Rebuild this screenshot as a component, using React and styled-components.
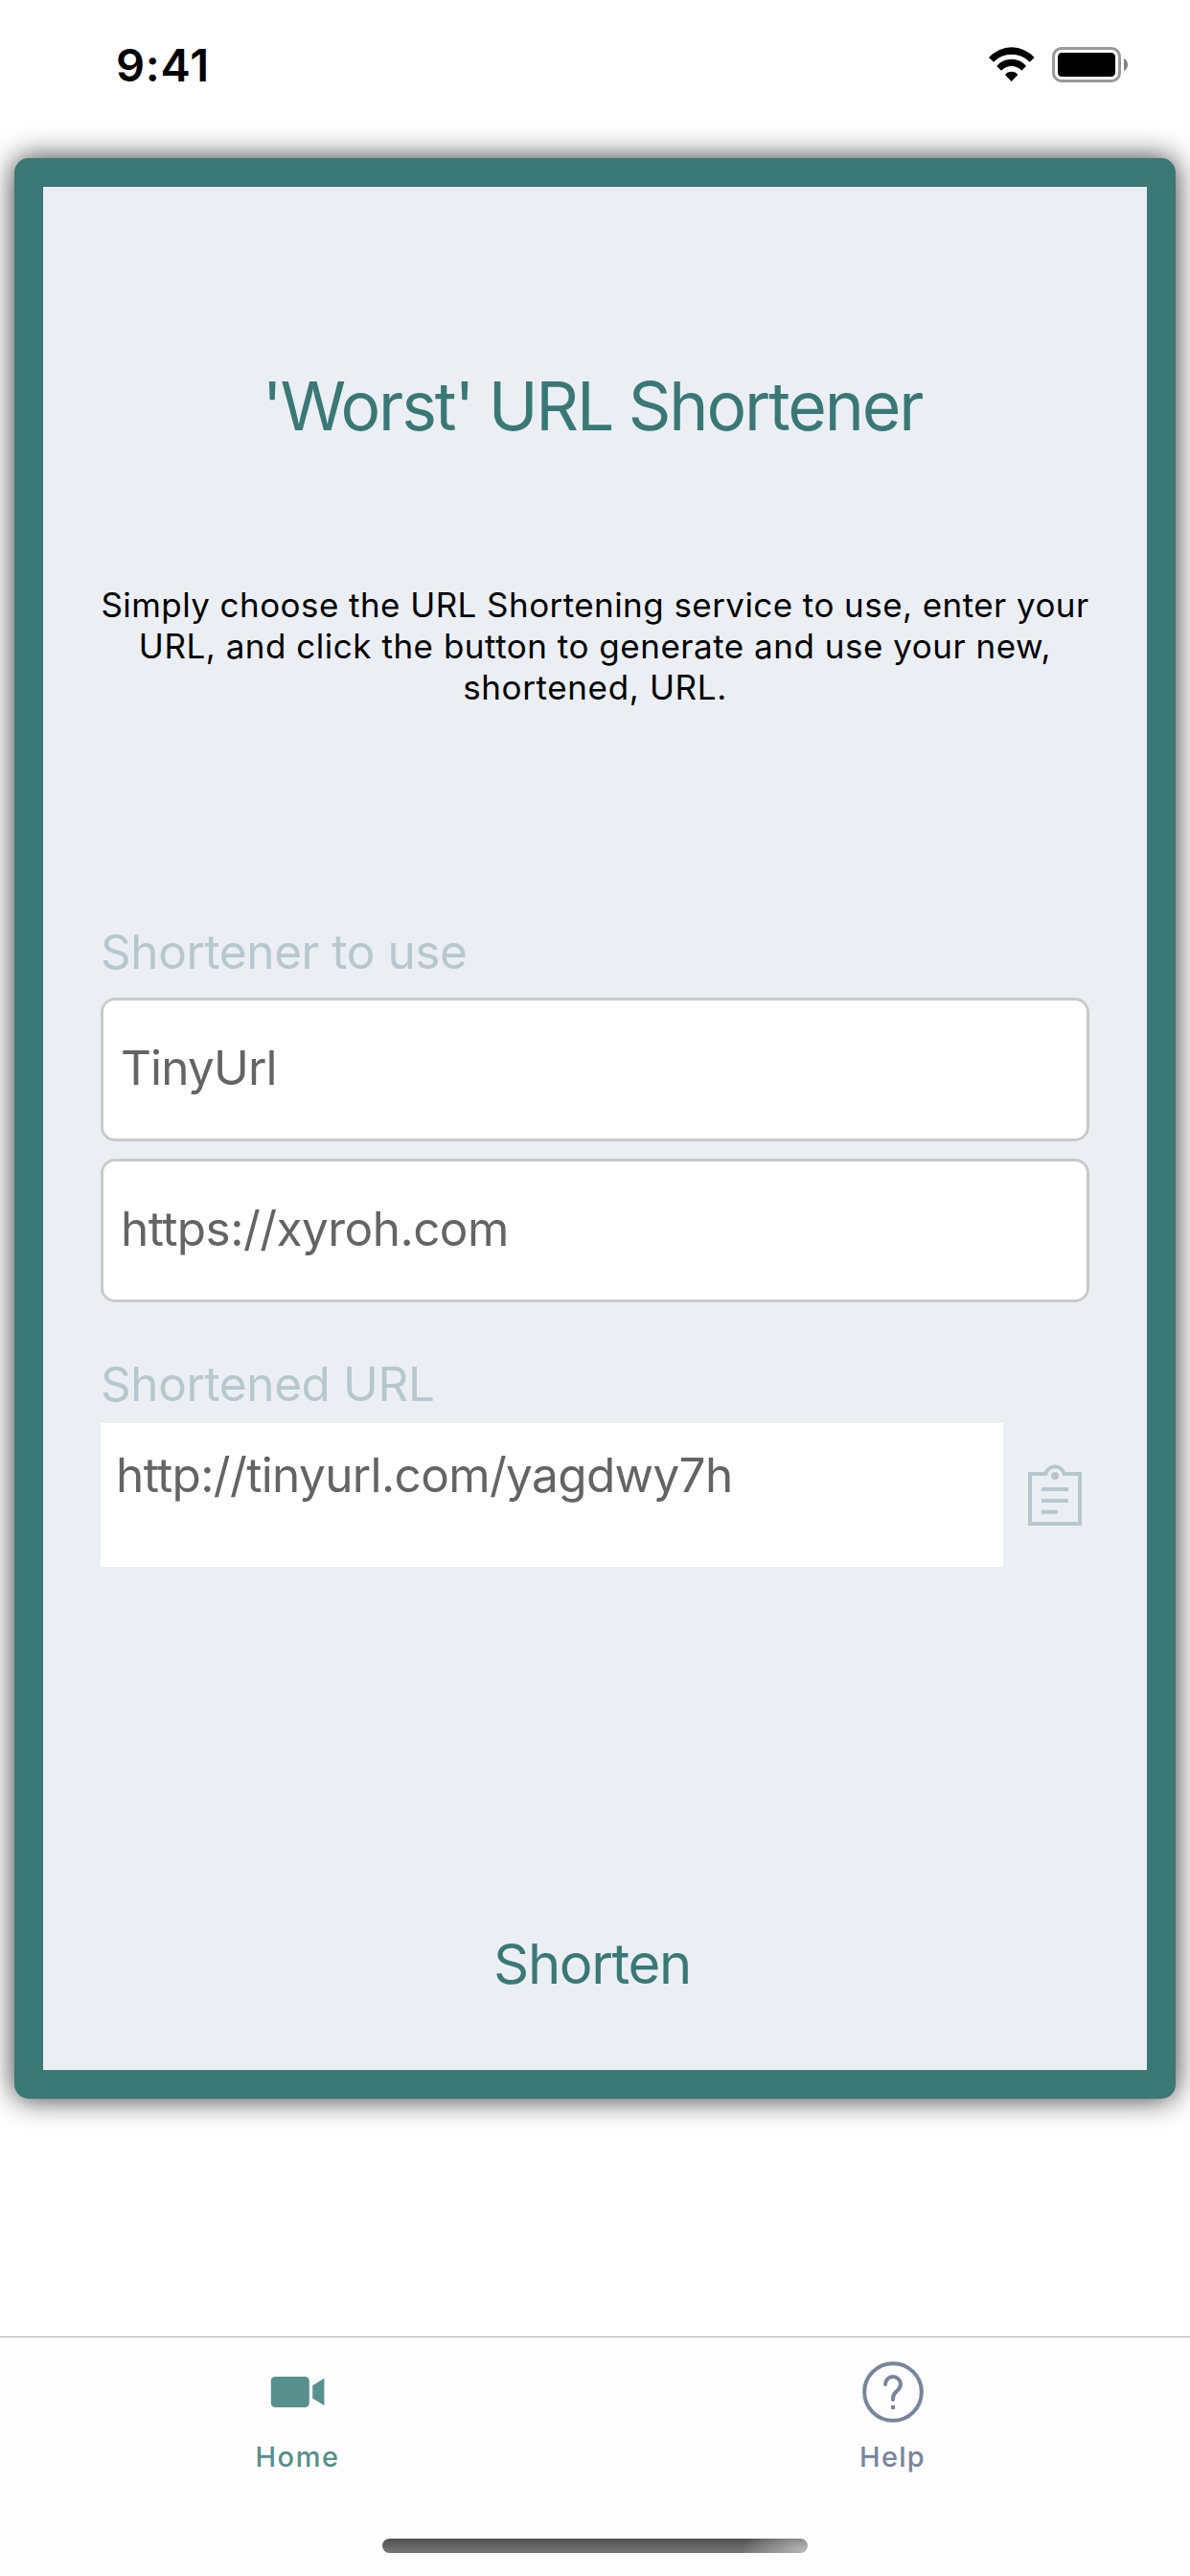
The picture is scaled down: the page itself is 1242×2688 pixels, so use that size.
import React from "react";
import styled, { createGlobalStyle } from "styled-components";

const color = {
  teal: "#3a7876",
  panel: "#ebeff4",
  muted: "#b7c7ce",
  text: "#646464",
  line: "#cacaca",
  active: "#57908c",
  inactive: "#78859b",
};

const GlobalStyle = createGlobalStyle`
  *, *::before, *::after { box-sizing: border-box; }
  body {
    margin: 0;
    background: #fff;
    font-family: Inter, "Liberation Sans", sans-serif;
    overflow: hidden;
  }
`;

const Screen = styled.div`
  display: flex;
  flex-direction: column;
  width: 1242px;
  height: 2688px;
  background: #fff;
`;

const StatusBar = styled.header`
  display: flex;
  justify-content: space-between;
  align-items: flex-start;
  height: 165px;
  padding: 40px 65px 0 121px;
`;

const Clock = styled.time`
  font-size: 47px;
  font-weight: 600;
  line-height: 56px;
  letter-spacing: 0.78px;
  color: #000;
`;

const StatusIcons = styled.div`
  display: flex;
  gap: 18px;
  padding-top: 9px;
`;

const Card = styled.main`
  display: flex;
  flex-direction: column;
  height: 2025px;
  margin: 0 15px;
  padding: 0 60px;
  border: 30px solid ${color.teal};
  border-radius: 15px;
  background: ${color.panel};
  box-shadow: 0 0 30px rgba(0, 0, 0, 0.8);
`;

const Title = styled.h1`
  margin: 187px 0 0;
  padding-right: 6px;
  font-size: 69.7px;
  font-weight: 400;
  line-height: 84px;
  letter-spacing: -2.15px;
  word-spacing: -1px;
  text-align: center;
  white-space: nowrap;
  color: ${color.teal};
`;

const Intro = styled.p`
  display: flex;
  flex-direction: column;
  align-items: center;
  margin: 144px 0 0;
  font-size: 35px;
  line-height: 43px;
  color: #000;
`;

const IntroLine = styled.span`
  white-space: nowrap;
  letter-spacing: ${(p) => p.$tracking}px;
`;

const Label = styled.label`
  margin-top: ${(p) => p.$top}px;
  font-size: 49.5px;
  line-height: 61px;
  letter-spacing: -0.4px;
  color: ${color.muted};
`;

const Fields = styled.div`
  display: flex;
  flex-direction: column;
  gap: 18px;
  margin-top: 17px;
`;

const Field = styled.div`
  display: flex;
  align-items: center;
  height: 150px;
  padding: 0 18px 4px;
  border: 3px solid ${color.line};
  border-radius: 15px;
  background: #fff;
  font-size: 49.5px;
  line-height: 61px;
  letter-spacing: ${(p) => p.$tracking}px;
  color: ${color.text};
`;

const ResultRow = styled.div`
  display: flex;
  gap: 18px;
  margin-top: 10px;
`;

const Result = styled.div`
  width: 942px;
  height: 150px;
  padding: 24px 16px 0;
  background: #fff;
  font-size: 49.5px;
  line-height: 61px;
  letter-spacing: -0.642px;
  color: ${color.text};
`;

const CopyButton = styled.button`
  display: flex;
  align-items: center;
  justify-content: center;
  width: 72px;
  padding: 0;
  border: 0;
  background: none;
`;

const ShortenButton = styled.button`
  margin-top: 379px;
  padding: 0 6px 0 0;
  border: 0;
  background: none;
  font-family: inherit;
  font-size: 58px;
  line-height: 70px;
  letter-spacing: -1.375px;
  color: ${color.teal};
`;

const TabBar = styled.nav`
  height: 250px;
  margin-top: auto;
  border-top: 1px solid #b2b2b2;
  background: #fdfdfd;
`;

const Tabs = styled.div`
  display: grid;
  grid-template-columns: 1fr 1fr;
  padding-top: 25px;
`;

const Tab = styled.a`
  display: flex;
  flex-direction: column;
  align-items: center;
  gap: 18px;
  font-size: 29px;
  font-weight: 500;
  line-height: 36px;
  letter-spacing: ${(p) => p.$tracking}px;
  color: ${(p) => (p.$active ? color.active : color.inactive)};
`;

const HomeIndicator = styled.div`
  width: 444px;
  height: 15px;
  margin: 67px auto 0;
  border-radius: 8px;
  background:
    radial-gradient(ellipse 70px 28px at 100% 85%, #b8b8b8, rgba(184, 184, 184, 0)),
    linear-gradient(#505050, #767676);
`;

const WifiIcon = () => (
  <svg width="48" height="36.33" viewBox="155 147 144 109">
    <path d="M155 180A96 96 0 0 1 298 180L283 194A78.5 78.5 0 0 0 170 194Z" />
    <path d="M180 207A59 59 0 0 1 272 207L258 221A43.6 43.6 0 0 0 194 221Z" />
    <path d="M206 234A26 26 0 0 1 246 234L226 255Z" />
  </svg>
);

const BatteryIcon = () => (
  <svg width="79.33" height="37.33" viewBox="354 147 238 112">
    <rect x="358.5" y="151.5" width="207" height="102" rx="25" fill="none" stroke="#999" strokeWidth="9" />
    <rect x="372" y="165" width="180" height="75" rx="13" />
    <path d="M579 183C595 190 595 215 579 222Z" fill="#808080" />
  </svg>
);

const ClipboardIcon = () => (
  <svg width="56" height="64" viewBox="219 204 168 192" fill={color.muted}>
    <path
      d="M274 234H225V390H381V234H332A30 30 0 0 0 274 234Z"
      fill="none"
      stroke={color.muted}
      strokeWidth="12"
    />
    <circle cx="303" cy="240" r="12" />
    <rect x="261" y="276" width="84" height="12" />
    <rect x="261" y="312" width="84" height="12" />
    <rect x="261" y="347" width="51" height="12" />
  </svg>
);

const VideoIcon = () => (
  <svg width="64" height="64" viewBox="0 0 64 64" fill="currentColor">
    <rect x="3.8" y="16" width="40" height="32" rx="4.5" />
    <path d="M47.2 25.3L59.4 17.8V46L47.2 38.5Z" />
  </svg>
);

const HelpIcon = () => (
  <svg width="64" height="64" viewBox="297 132 192 192" fill="none" stroke="currentColor" strokeWidth="12">
    <circle cx="393" cy="228" r="89.5" />
    <path d="M369 204a24 24 0 0 1 48 0c0 20-24 22-24 42v6" strokeLinecap="round" />
    <rect x="387" y="270" width="12" height="12" fill="currentColor" stroke="none" />
  </svg>
);

export default function App() {
  return (
    <Screen>
      <GlobalStyle />
      <StatusBar>
        <Clock>9:41</Clock>
        <StatusIcons>
          <WifiIcon />
          <BatteryIcon />
        </StatusIcons>
      </StatusBar>

      <Card>
        <Title>'Worst' URL Shortener</Title>
        <Intro>
          <IntroLine $tracking={0.434}>Simply choose the URL Shortening service to use, enter your</IntroLine>
          <IntroLine $tracking={0.514}>URL, and click the button to generate and use your new,</IntroLine>
          <IntroLine $tracking={0.629}>shortened, URL.</IntroLine>
        </Intro>

        <Label $top={224}>Shortener to use</Label>
        <Fields>
          <Field $tracking={-0.837}>TinyUrl</Field>
          <Field $tracking={-0.54}>https://xyroh.com</Field>
        </Fields>

        <Label $top={55}>Shortened URL</Label>
        <ResultRow>
          <Result>http://tinyurl.com/yagdwy7h</Result>
          <CopyButton aria-label="Copy">
            <ClipboardIcon />
          </CopyButton>
        </ResultRow>

        <ShortenButton>Shorten</ShortenButton>
      </Card>

      <TabBar>
        <Tabs>
          <Tab $active $tracking={1.577}>
            <VideoIcon />
            Home
          </Tab>
          <Tab $tracking={1.255}>
            <HelpIcon />
            Help
          </Tab>
        </Tabs>
        <HomeIndicator />
      </TabBar>
    </Screen>
  );
}
